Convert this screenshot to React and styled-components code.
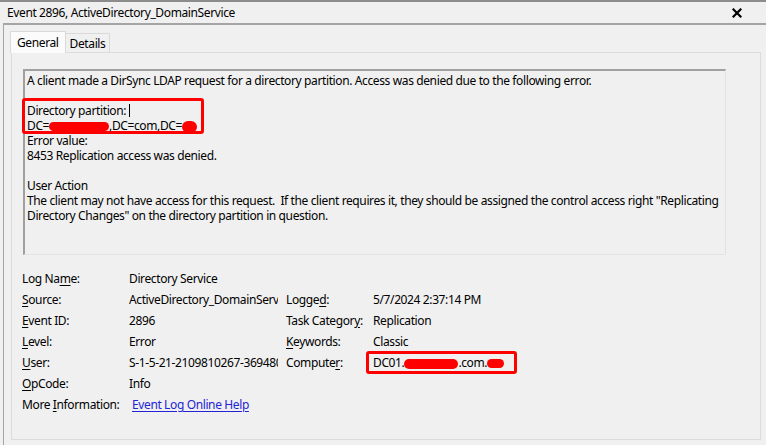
import React from "react";
import styled, { createGlobalStyle } from "styled-components";

const GlobalStyle = createGlobalStyle`
  html, body { margin: 0; padding: 0; background: #f0f0f0; }
  body {
    font-family: "Noto Sans", "Open Sans", sans-serif;
    font-size: 12px;
    letter-spacing: -0.38px;
    color: #000;
  }
  * { box-sizing: border-box; }
`;

const Window = styled.div`
  width: 766px;
  height: 445px;
  overflow: hidden;
  background: #f0f0f0;
  border-top: 2px solid #8c8c8c;
  display: flex;
  flex-direction: column;
`;

const TitleBar = styled.div`
  height: 21px;
  flex: none;
  display: flex;
  align-items: center;
  justify-content: space-between;
  padding: 0 24px 0 7px;
`;

const Title = styled.span`
  white-space: nowrap;
`;

const CloseButton = styled.span`
  display: flex;
  align-items: center;
`;

const Frame = styled.div`
  flex: 1;
  margin-left: 3px;
  border-left: 1px solid #a5a5a5;
  border-top: 2px solid #a5a5a5;
  padding: 6px 0 0 6px;
  display: flex;
  flex-direction: column;
`;

const TabRow = styled.div`
  display: flex;
  align-items: flex-end;
  height: 21px;
  position: relative;
  z-index: 1;
`;

const Tab = styled.div`
  height: ${(p) => (p.$active ? "22px" : "19px")};
  padding: ${(p) => (p.$active ? "0 6px" : "0 4px")};
  margin-bottom: ${(p) => (p.$active ? "-1px" : "0")};
  margin-left: ${(p) => (p.$active ? "0" : "-1px")};
  border: 1px solid #d9d9d9;
  border-bottom: none;
  background: ${(p) => (p.$active ? "#fbfbfb" : "#f0f0f0")};
  display: flex;
  align-items: center;
  padding-bottom: ${(p) => (p.$active ? "1px" : "0")};
  white-space: nowrap;
`;

const Panel = styled.div`
  margin-left: 1px;
  width: 750px;
  height: 388px;
  border: 1px solid #dcdcdc;
  background: #f0f0f0;
  padding: 16px 0 0 11px;
`;

const TextBox = styled.div`
  width: 703px;
  height: 186px;
  border-top: 2px solid #a0a0a0;
  border-left: 2px solid #a0a0a0;
  border-right: 1px solid #e3e3e3;
  border-bottom: 1px solid #e3e3e3;
  padding: 2px 2px 0 2px;
  line-height: 15px;
`;

const Line = styled.div`
  height: 15px;
  white-space: nowrap;
`;

const Marked = styled.div`
  position: relative;
  width: fit-content;
  &::after {
    content: "";
    position: absolute;
    top: ${(p) => p.$t}px;
    left: ${(p) => p.$l}px;
    right: ${(p) => p.$r}px;
    bottom: ${(p) => p.$b}px;
    border: 3px solid #ff0000;
    border-radius: 3px;
    pointer-events: none;
  }
`;

const MarkedInline = styled(Marked)`
  display: inline-block;
`;

const Redact = styled.span`
  display: inline-block;
  width: ${(p) => p.$w}px;
  height: ${(p) => p.$h}px;
  background: #ff0000;
  border-radius: ${(p) => p.$h / 2}px;
  vertical-align: middle;
`;

const Caret = styled.span`
  display: inline-block;
  width: 1px;
  height: 13px;
  background: #000;
  margin-left: 3px;
  vertical-align: -2px;
`;

const Fields = styled.div`
  margin-top: 13px;
  margin-left: -1px;
  display: grid;
  grid-template-columns: 107px 157px 87px 1fr;
  grid-auto-rows: 21px;
  align-items: center;
`;

const Label = styled.div`
  white-space: nowrap;
`;

const Value = styled.div`
  white-space: nowrap;
  overflow: ${(p) => (p.$clip ? "hidden" : "visible")};
  max-width: ${(p) => (p.$clip ? "149px" : "none")};
`;

const Key = styled.span`
  text-decoration: underline;
  text-underline-offset: 2px;
`;

const Link = styled.a`
  color: #2424d6;
  text-decoration: underline;
  text-underline-offset: 2px;
  margin-left: 3px;
  cursor: pointer;
`;

const CloseIcon = () => (
  <svg width="10" height="10" viewBox="0 0 10 10">
    <path d="M1.5 1.5 L8.5 8.5 M8.5 1.5 L1.5 8.5" stroke="#000" strokeWidth="2.2" strokeLinecap="square" />
  </svg>
);

export default function App() {
  return (
    <>
      <GlobalStyle />
      <Window>
        <TitleBar>
          <Title>Event 2896, ActiveDirectory_DomainService</Title>
          <CloseButton>
            <CloseIcon />
          </CloseButton>
        </TitleBar>
        <Frame>
          <TabRow>
            <Tab $active>General</Tab>
            <Tab>Details</Tab>
          </TabRow>
          <Panel>
            <TextBox>
              <Line>
                A client made a DirSync LDAP request for a directory partition. Access was denied due to the following error.
              </Line>
              <Line />
              <Marked $t={-5} $l={-5} $r={-7} $b={-1}>
                <Line>
                  Directory partition:
                  <Caret />
                </Line>
                <Line>
                  DC=<Redact $w={60} $h={9} />,DC=com,DC=<Redact $w={15} $h={12} />
                </Line>
              </Marked>
              <Line>Error value:</Line>
              <Line>8453 Replication access was denied.</Line>
              <Line />
              <Line>User Action</Line>
              <Line>
                The client may not have access for this request.&nbsp; If the client requires it, they should be assigned the control access right "Replicating
              </Line>
              <Line>Directory Changes" on the directory partition in question.</Line>
            </TextBox>
            <Fields>
              <Label>Log Na<Key>m</Key>e:</Label>
              <Value>Directory Service</Value>
              <Label />
              <Value />

              <Label><Key>S</Key>ource:</Label>
              <Value $clip>ActiveDirectory_DomainServi</Value>
              <Label>Logge<Key>d</Key>:</Label>
              <Value>5/7/2024 2:37:14 PM</Value>

              <Label><Key>E</Key>vent ID:</Label>
              <Value>2896</Value>
              <Label>Task Categor<Key>y</Key>:</Label>
              <Value>Replication</Value>

              <Label><Key>L</Key>evel:</Label>
              <Value>Error</Value>
              <Label><Key>K</Key>eywords:</Label>
              <Value>Classic</Value>

              <Label><Key>U</Key>ser:</Label>
              <Value $clip>S-1-5-21-2109810267-3694806</Value>
              <Label>Compute<Key>r</Key>:</Label>
              <Value>
                <MarkedInline $t={-3} $l={-7} $r={-13} $b={-3}>
                  DC01.<Redact $w={54} $h={10} />.com.<Redact $w={17} $h={9} />
                </MarkedInline>
              </Value>

              <Label><Key>O</Key>pCode:</Label>
              <Value>Info</Value>
              <Label />
              <Value />

              <Label>More <Key>I</Key>nformation:</Label>
              <Value>
                <Link>Event Log Online Help</Link>
              </Value>
              <Label />
              <Value />
            </Fields>
          </Panel>
        </Frame>
      </Window>
    </>
  );
}
